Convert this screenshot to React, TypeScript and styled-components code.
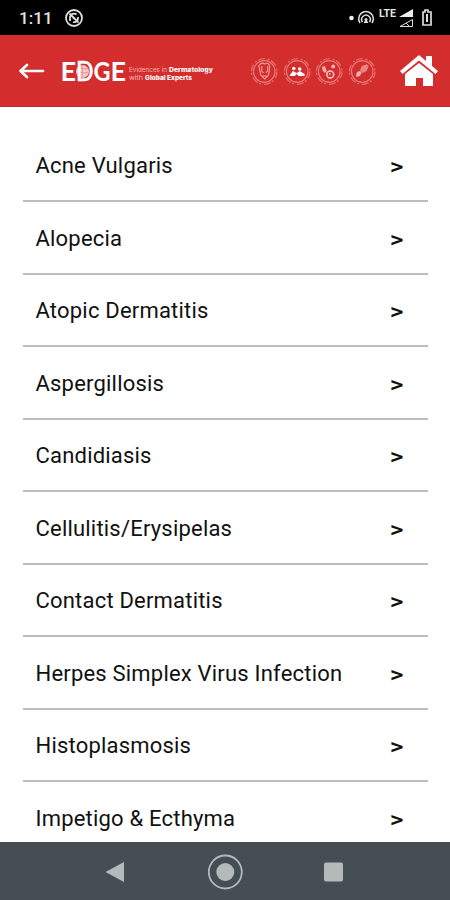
import React from "react";
import styled, { createGlobalStyle } from "styled-components";

const GlobalStyle = createGlobalStyle`
  *{box-sizing:border-box}
  body{margin:0;background:#fff;font-family:Roboto,sans-serif;color:#111;overflow:hidden}
  svg{display:block;flex:none}
`;
const Screen = styled.div`
  width: 450px;
  height: 900px;
  display: flex;
  flex-direction: column;
  overflow: hidden;
`;
const StatusBar = styled.div`
  flex: none;
  height: 35px;
  background: #000;
  color: #e4e4e4;
  display: flex;
  align-items: center;
  padding: 0 16px 0 19px;
`;
const Clock = styled.span`
  width: 45px;
  font-size: 17px;
  font-weight: 500;
  letter-spacing: 0.1px;
`;
const StatusIcons = styled.div`
  margin-left: auto;
`;
const Header = styled.header`
  flex: none;
  height: 71.5px;
  background: #d32d2d;
  border-bottom: 1px solid #c52929;
  display: flex;
  align-items: center;
  padding-top: 1.5px;
`;
const BackButton = styled.button`
  width: 62px;
  height: 69px;
  padding: 0 0 0 18px;
  border: 0;
  background: none;
`;
const Badges = styled.div`
  display: flex;
  gap: 4px;
  margin-left: 32px;
`;
const HomeButton = styled.button`
  margin-left: 23px;
  padding: 0;
  border: 0;
  background: none;
`;
const List = styled.ul`
  flex: 1;
  min-height: 0;
  overflow: hidden;
  list-style: none;
  margin: 0;
  padding: 23.3px 22px 0 23px;
`;
const Row = styled.li`
  height: 72.5px;
  padding: 1.2px 26px 0 12.5px;
  border-bottom: 2px solid #bdbdbd;
  display: flex;
  align-items: center;
  justify-content: space-between;
  font-size: 22px;
  letter-spacing: 0.2px;
  white-space: nowrap;
`;
const Chevron = styled.span`
  font-size: 22px;
  font-weight: 500;
  letter-spacing: 0;
  padding-top: 2px;
  transform: scaleX(1.2);
`;
const NavBar = styled.nav`
  flex: none;
  height: 58px;
  background: #464e53;
  display: flex;
  align-items: center;
  justify-content: center;
  gap: 73px;
  padding: 1px 0 0;
`;
const NavButton = styled.button`
  width: 36px;
  height: 36px;
  padding: 0;
  border: 0;
  background: none;
`;

const topics = [
  "Acne Vulgaris", "Alopecia", "Atopic Dermatitis", "Aspergillosis", "Candidiasis",
  "Cellulitis/Erysipelas", "Contact Dermatitis", "Herpes Simplex Virus Infection",
  "Histoplasmosis", "Impetigo & Ecthyma",
];

const NotificationIcon = () => (
  <svg width="20" height="20" viewBox="0 0 20 20" fill="none" stroke="#ddd" strokeWidth="1.8">
    <circle cx="10" cy="10" r="8" />
    <path d="M6 13V9a4 4 0 0 1 6.500-2.500M14 9v1.500a4 4 0 0 1-5 3.500M5.500 5.500l9 9M9 9.500l3 2.500" />
  </svg>
);

const SystemIcons = () => (
  <svg width="86" height="24" viewBox="0 0 86 24" fill="none" stroke="#ddd">
    <circle cx="3.500" cy="12" r="2.300" fill="#eee" stroke="none" />
    <path d="M12 17a7.300 7.300 0 1 1 12 0M14.500 16a4.300 4.300 0 1 1 7 0" strokeWidth="1.500" />
    <circle cx="18" cy="13.500" r="1.500" fill="#ddd" stroke="none" />
    <path d="M18 13l-2.500 4h5z" fill="#ddd" stroke="none" />
    <text x="31" y="11" fontFamily="Roboto, sans-serif" fontWeight="700" fontSize="10.500" textLength="17" lengthAdjust="spacingAndGlyphs" fill="#e4e4e4" stroke="none">LTE</text>
    <path d="M65 3v8H51z" fill="#eee" stroke="none" />
    <path d="M64.500 13.500v7H52zM58 17l3 3" strokeWidth="1" />
    <path d="M75 6h2V4h3v2h3v13h-8z" strokeWidth="1.700" />
    <path d="M79 8v8" strokeWidth="2" />
  </svg>
);

const Logo = () => (
  <svg width="156" height="34" viewBox="0 0 156 34" fill="#fff" fontFamily="Lato, sans-serif">
    <circle cx="20.500" cy="17.500" r="6.500" fill="#f9caca" />
    <path d="M15 15c4-3 7 2 11-1M15 20c4-4 7 1 11-2M20 11v13" stroke="#e58a8a" fill="none" />
    <g fontSize="26" fontWeight="700">
      <text x="-1.500" y="26.500" textLength="15.500" lengthAdjust="spacingAndGlyphs">E</text>
      <text x="14" y="26.500" fontWeight="400" stroke="#fff" strokeWidth="0.600" textLength="17.500" lengthAdjust="spacingAndGlyphs">D</text>
      <text x="31.500" y="26.500" textLength="17" lengthAdjust="spacingAndGlyphs">G</text>
      <text x="48.500" y="26.500" textLength="15.500" lengthAdjust="spacingAndGlyphs">E</text>
    </g>
    <g fontSize="6.500" fontFamily="Inter, sans-serif">
      <text x="67" y="18" fill="#f3b5b5" textLength="38" lengthAdjust="spacingAndGlyphs">Evidences in</text>
      <text x="107" y="18" fontWeight="800" textLength="44" lengthAdjust="spacingAndGlyphs">Dermatology</text>
      <text x="67" y="26" fill="#f3b5b5" textLength="14" lengthAdjust="spacingAndGlyphs">with</text>
      <text x="83" y="26" fontWeight="800" textLength="47" lengthAdjust="spacingAndGlyphs">Global Experts</text>
    </g>
  </svg>
);

const badgeArt = [
  <g key="face" fill="none" stroke="#f0a09e" strokeWidth="1.100"><path d="M9 9c1-3 4-4 6-2 3-2 5 0 5 3l-1 8-4 4-4-4zM12 9v5l2 2M18 9v5l-2 2M13 19h4" /></g>,
  <g key="people" fill="#fff"><circle cx="11" cy="11.500" r="1.800" /><circle cx="17" cy="12" r="1.800" /><path d="M7 18l3-4 4 2 3-2 5 3v2h-6l-2-2-2 2H7z" /></g>,
  <g key="cells" fill="#f4b0ad"><path d="M7 10l3-1 2 5-2 2-2-2z" /><circle cx="18.500" cy="9.500" r="2" /><circle cx="15.500" cy="17.500" r="3.500" fill="none" stroke="#fac8c6" strokeWidth="1.600" /><circle cx="15" cy="17" r="1" /></g>,
  <g key="tool" fill="#f4b0ad"><path d="M8 19l1-4 3-1 2 2-2 3-3 1z" /><path d="M12 14l2-5 5-2 2 2-2 5-4 2z" fillOpacity=".65" /></g>,
];

const Badge = ({ children }: { children: React.ReactNode }) => (
  <svg width="28.500" height="29" viewBox="0 0 29 29" fill="none">
    <circle cx="14.500" cy="14.500" r="13" stroke="#e56f6d" strokeWidth="1.300" strokeDasharray="7 3 2 1.600" />
    <circle cx="14.500" cy="14.500" r="11" stroke="#e77b79" strokeWidth="1.200" />
    {children}
  </svg>
);

export default function App() {
  return (
    <>
      <GlobalStyle />
      <Screen>
        <StatusBar>
          <Clock>1:11</Clock>
          <NotificationIcon />
          <StatusIcons><SystemIcons /></StatusIcons>
        </StatusBar>
        <Header>
          <BackButton aria-label="Back">
            <svg width="28" height="18" viewBox="0 0 28 18" fill="none" stroke="#fff" strokeWidth="2.700" strokeLinecap="round" strokeLinejoin="round">
              <path d="M25 9H3M9 3L2.500 9L9 15" />
            </svg>
          </BackButton>
          <Logo />
          <Badges>{badgeArt.map((art, i) => <Badge key={i}>{art}</Badge>)}</Badges>
          <HomeButton aria-label="Home">
            <svg width="40" height="34" viewBox="0 0 40 34" fill="#fff">
              <path d="M20 1L27 7V2h6v10l6 5-2.500 3L20 6.500 3.500 20 1 17z" />
              <path d="M6 20L20 9l14 11v12H24v-8h-7v8H6z" />
            </svg>
          </HomeButton>
        </Header>
        <List>
          {topics.map((topic) => (
            <Row key={topic}><span>{topic}</span><Chevron>&gt;</Chevron></Row>
          ))}
        </List>
        <NavBar>
          <NavButton aria-label="Back">
            <svg width="36" height="36" fill="#b4babc"><path d="M7.500 18L26 8v20z" /></svg>
          </NavButton>
          <NavButton aria-label="Home">
            <svg width="36" height="36" fill="#b4babc"><circle cx="18.300" cy="18" r="9" /><circle cx="18.300" cy="18" r="16.500" fill="none" stroke="#b4babc" strokeWidth="1.800" /></svg>
          </NavButton>
          <NavButton aria-label="Recent apps">
            <svg width="36" height="36" fill="#b4babc"><rect x="8" y="8.500" width="19" height="19" rx="2" /></svg>
          </NavButton>
        </NavBar>
      </Screen>
    </>
  );
}
